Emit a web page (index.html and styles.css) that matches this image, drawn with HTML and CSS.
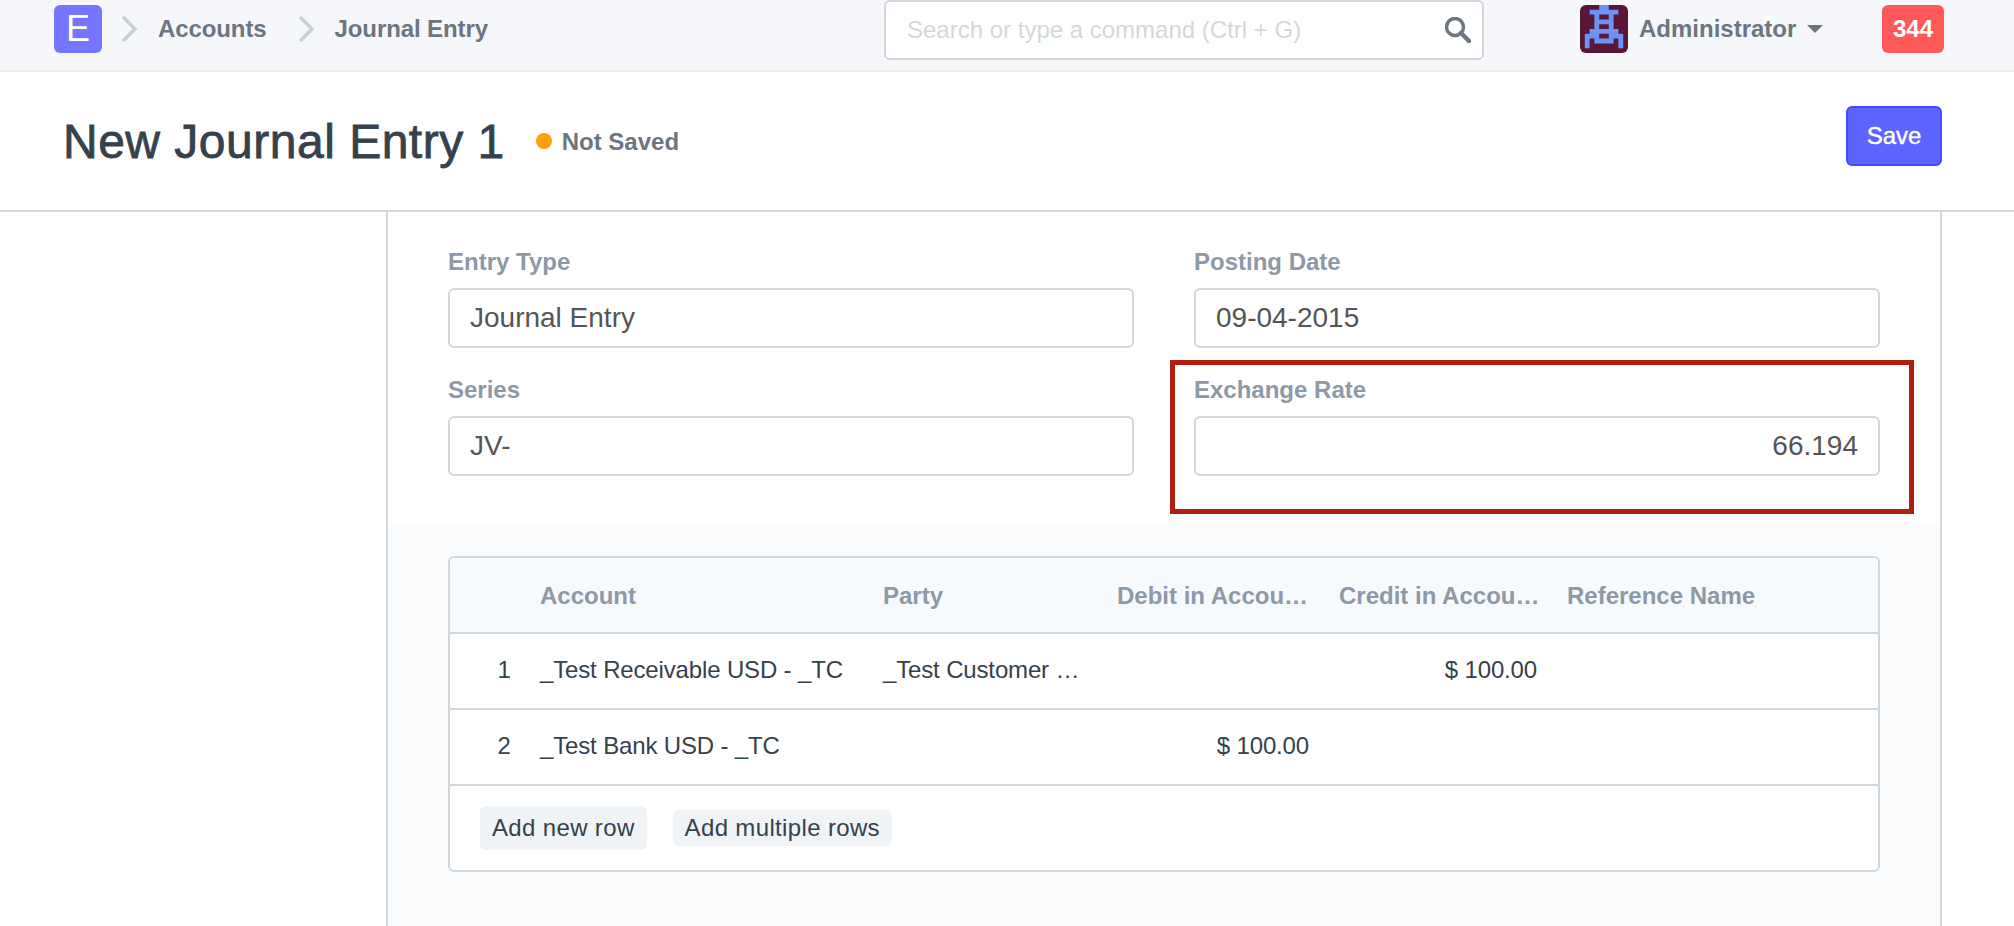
FILE: index.html
```html
<!DOCTYPE html>
<html>
<head>
    <title>New Journal Entry 1</title>
    <meta charset="UTF-8">
    <link rel="stylesheet" href="styles.css">
</head>
<body>
    <header class="navbar">
        <div class="nav-left">
            <div class="logo">E</div>
            <svg class="crumb-arrow" viewBox="0 0 16 28"><path d="M2 2 L14 14 L2 26" /></svg>
            <a class="crumb">Accounts</a>
            <svg class="crumb-arrow" viewBox="0 0 16 28"><path d="M2 2 L14 14 L2 26" /></svg>
            <a class="crumb">Journal Entry</a>
        </div>
        <div class="search">
            <span class="search-text">Search or type a command (Ctrl + G)</span>
            <svg class="search-icon" viewBox="0 0 26 26"><circle cx="10" cy="10" r="8.5" /><path d="M16 16 L24 24" /></svg>
        </div>
        <svg class="avatar" viewBox="0 0 10 10">
            <rect class="avatar-bg" width="10" height="10" rx="1.25" />
            <path class="avatar-art" d="M4 0h2v1h-2z M2 1h6v1h-6z M3 2h1v1h-1z M6 2h1v1h-1z M3 3h4v1h-4z M3 4h1v1h-1z M6 4h1v1h-1z M2 5h6v1h-6z M1 6h3v1h-3z M6 6h3v1h-3z M1 7h1v2h-1z M8 7h1v2h-1z M3 7h4v1h-4z" />
        </svg>
        <span class="user-name">Administrator</span>
        <span class="caret"></span>
        <span class="badge">344</span>
    </header>

    <div class="page-head">
        <h1 class="page-title">New Journal Entry 1</h1>
        <span class="status-dot"></span>
        <span class="status-text">Not Saved</span>
        <button class="btn-save" type="button">Save</button>
    </div>

    <div class="form-page">
        <section class="form-top">
            <div class="field">
                <div class="field-label">Entry Type</div>
                <div class="field-input">Journal Entry</div>
            </div>
            <div class="field">
                <div class="field-label">Posting Date</div>
                <div class="field-input">09-04-2015</div>
            </div>
            <div class="field">
                <div class="field-label">Series</div>
                <div class="field-input">JV-</div>
            </div>
            <div class="field">
                <div class="field-label">Exchange Rate</div>
                <div class="field-input text-right">66.194</div>
                <div class="highlight"></div>
            </div>
        </section>

        <section class="form-grid-wrap">
            <div class="grid-box">
                <div class="grid-row grid-head">
                    <div class="cell"></div>
                    <div class="cell">Account</div>
                    <div class="cell">Party</div>
                    <div class="cell">Debit in Accou…</div>
                    <div class="cell">Credit in Accou…</div>
                    <div class="cell">Reference Name</div>
                </div>
                <div class="grid-row">
                    <div class="cell row-index">1</div>
                    <div class="cell">_Test Receivable USD - _TC</div>
                    <div class="cell">_Test Customer …</div>
                    <div class="cell"></div>
                    <div class="cell text-right">$ 100.00</div>
                    <div class="cell"></div>
                </div>
                <div class="grid-row">
                    <div class="cell row-index">2</div>
                    <div class="cell">_Test Bank USD - _TC</div>
                    <div class="cell"></div>
                    <div class="cell text-right">$ 100.00</div>
                    <div class="cell"></div>
                    <div class="cell"></div>
                </div>
                <div class="grid-footer">
                    <button class="btn-add btn-add-tall" type="button">Add new row</button>
                    <button class="btn-add" type="button">Add multiple rows</button>
                </div>
            </div>
        </section>
    </div>
</body>
</html>
```

FILE: styles.css
```css
/* Page */
html, body {
    margin: 0;
    height: 100%;
}

body {
    display: flex;
    flex-direction: column;
    font-family: "Liberation Sans", Arial, sans-serif;
    font-size: 24px;
    color: #36414c;
    background-color: #fff;
    overflow: hidden;
}

/* Top navbar */
.navbar {
    display: flex;
    align-items: center;
    flex-shrink: 0;
    height: 70px;
    padding: 0 70px 0 54px;
    margin-bottom: 2px;
    background-color: #f5f7fa;
    box-shadow: 0 2px 0 #ebeff2;
}

.nav-left {
    display: flex;
    align-items: center;
    width: 830px;
    height: 100%;
}

.logo {
    width: 48px;
    height: 48px;
    margin-top: -12px;
    margin-right: 19px;
    border-radius: 6px;
    background-color: #7575ff;
    color: #fff;
    font-size: 36px;
    line-height: 48px;
    text-align: center;
}

.crumb-arrow {
    width: 16px;
    height: 28px;
    margin-top: -12px;
    margin-right: 21px;
    fill: none;
    stroke: #c8d0d6;
    stroke-width: 3.5;
}

.crumb {
    margin-top: -12px;
    margin-right: 31px;
    font-weight: bold;
    letter-spacing: -0.1px;
    color: #6c7680;
}

/* Search box */
.search {
    display: flex;
    align-items: center;
    justify-content: space-between;
    box-sizing: border-box;
    width: 600px;
    height: 60px;
    margin-top: -10px;
    padding: 0 11px 0 21px;
    border: 2px solid #d1d8dd;
    border-radius: 6px;
    background-color: #fff;
}

.search-text {
    color: #d1d8dd;
}

.search-icon {
    width: 26px;
    height: 26px;
    fill: none;
    stroke: #6c7680;
    stroke-width: 3.5;
}

.search-icon path {
    stroke-width: 4.5;
    stroke-linecap: round;
}

/* User menu */
.avatar {
    width: 48px;
    height: 48px;
    margin-top: -12px;
    margin-left: 96px;
    flex-shrink: 0;
}

.avatar-bg {
    fill: #5a1636;
}

.avatar-art {
    fill: #6d92f5;
}

.user-name {
    margin-top: -12px;
    margin-left: 11px;
    font-weight: bold;
    color: #6c7680;
    white-space: nowrap;
}

.caret {
    width: 0;
    height: 0;
    margin-top: -12px;
    margin-left: 11px;
    border-top: 8px solid #6c7680;
    border-left: 8px solid transparent;
    border-right: 8px solid transparent;
}

.badge {
    width: 62px;
    height: 48px;
    margin-top: -12px;
    margin-left: auto;
    border-radius: 6px;
    background-color: #ff5858;
    color: #fff;
    font-weight: bold;
    line-height: 48px;
    text-align: center;
}

/* Page title row */
.page-head {
    display: flex;
    align-items: center;
    flex-shrink: 0;
    height: 138px;
    padding: 0 72px 0 63px;
    border-bottom: 2px solid #d1d8dd;
}

.page-title {
    margin: 0;
    font-size: 48px;
    font-weight: normal;
    letter-spacing: 0.5px;
    -webkit-text-stroke: 0.8px #36414c;
    color: #36414c;
}

.status-dot {
    width: 16px;
    height: 16px;
    margin-left: 31px;
    margin-right: 10px;
    border-radius: 50%;
    background-color: #ffa00a;
}

.status-text {
    margin-top: 2px;
    font-weight: bold;
    color: #6c7680;
}

.btn-save {
    width: 96px;
    height: 60px;
    margin-top: -10px;
    margin-left: auto;
    border: 2px solid #444bff;
    border-radius: 6px;
    background-color: #5e64ff;
    color: #fff;
    font-family: inherit;
    font-size: 24px;
    -webkit-text-stroke: 0.4px #fff;
}

/* Form column */
.form-page {
    display: flex;
    flex-direction: column;
    flex: 1;
    margin: 0 72px 0 386px;
    border-left: 2px solid #d1d8dd;
    border-right: 2px solid #d1d8dd;
}

.form-top {
    display: grid;
    grid-template-columns: 1fr 1fr;
    column-gap: 60px;
    row-gap: 27px;
    padding: 35px 60px 50px 60px;
}

.field {
    position: relative;
}

.field-label {
    height: 30px;
    margin-bottom: 11px;
    font-weight: bold;
    line-height: 30px;
    color: #8d99a6;
}

.field-input {
    box-sizing: border-box;
    height: 60px;
    padding: 0 20px;
    border: 2px solid #d1d8dd;
    border-radius: 6px;
    font-size: 28px;
    line-height: 56px;
    color: #555;
}

.text-right {
    text-align: right;
}

/* Red box drawn over the screenshot */
.highlight {
    position: absolute;
    top: -15px;
    left: -24px;
    right: -34px;
    bottom: -38px;
    border: 5px solid #b11f10;
}

/* Child table */
.form-grid-wrap {
    flex: 1;
    padding: 30px 60px 0 60px;
    background-color: #fafbfc;
}

.grid-box {
    border: 2px solid #d1d8dd;
    border-radius: 6px;
    background-color: #fff;
}

.grid-row {
    display: grid;
    grid-template-columns: 70px 343px 234px 222px 228px 1fr;
    align-items: center;
    height: 74px;
    border-bottom: 2px solid #d1d8dd;
}

.grid-head {
    border-radius: 6px 6px 0 0;
    background-color: #f7fafc;
    font-weight: bold;
    color: #8d99a6;
}

.cell {
    padding: 0 10px 2px 20px;
    letter-spacing: -0.15px;
    white-space: nowrap;
}

.grid-head .cell {
    padding-top: 2px;
    padding-bottom: 0;
    letter-spacing: 0;
}

.row-index {
    padding-left: 38px;
    padding-right: 0;
    text-align: center;
}

.grid-footer {
    display: flex;
    align-items: center;
    gap: 26px;
    height: 84px;
    padding-left: 30px;
}

.btn-add {
    height: 36px;
    padding: 0 12px;
    border: none;
    border-radius: 6px;
    background-color: #f0f4f7;
    color: #36414c;
    font-family: inherit;
    font-size: 24px;
    letter-spacing: 0.35px;
}

.btn-add-tall {
    height: 44px;
}
```
